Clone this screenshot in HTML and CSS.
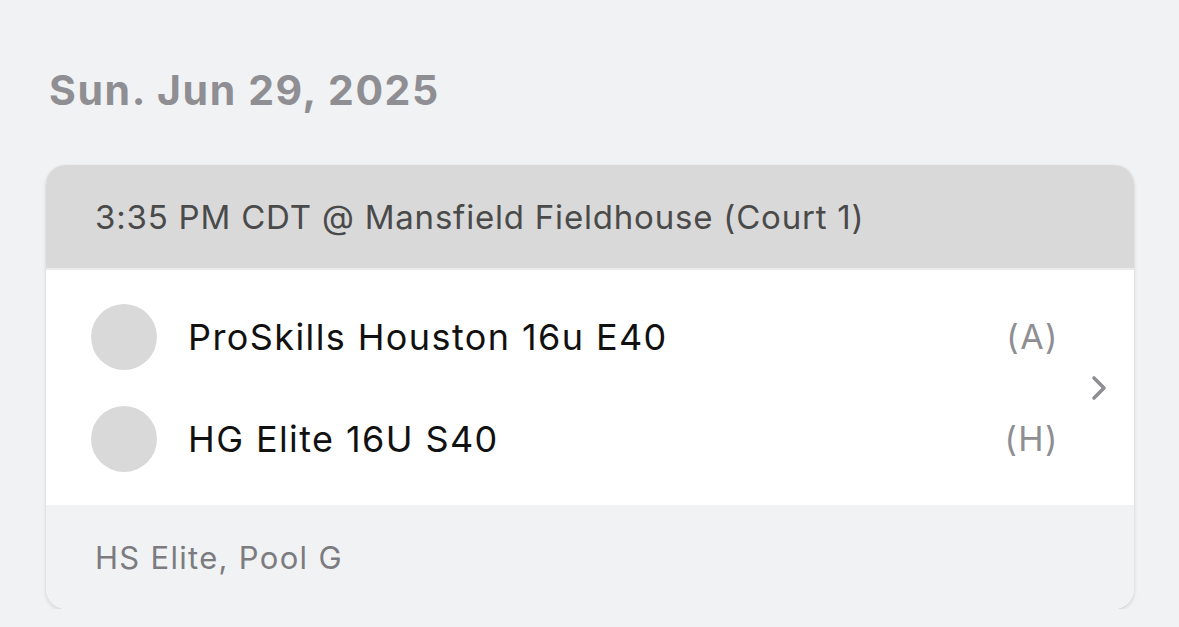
FILE: index.html
```html
<!DOCTYPE html>
<html>
<head>
<meta charset="utf-8">
<link rel="stylesheet" href="styles.css">
</head>
<body>
<main class="page">
  <h2 class="date">Sun. Jun 29, 2025</h2>
  <section class="card">
    <header class="card-head">3:35 PM CDT @ Mansfield Fieldhouse (Court 1)</header>
    <div class="card-body">
      <div class="teams">
        <div class="team">
          <span class="avatar"></span>
          <span class="name">ProSkills Houston 16u E40</span>
          <span class="side">(A)</span>
        </div>
        <div class="team">
          <span class="avatar"></span>
          <span class="name">HG Elite 16U S40</span>
          <span class="side">(H)</span>
        </div>
      </div>
      <svg class="chevron" width="16" height="26" viewBox="0 0 16 26">
        <path d="M3 3 L13 13 L3 23" fill="none" stroke="#8e8e93" stroke-width="3.6" stroke-linecap="round" stroke-linejoin="round"/>
      </svg>
    </div>
    <footer class="card-foot">HS Elite, Pool G</footer>
  </section>
</main>
</body>
</html>
```
FILE: styles.css
```css
html, body {
  margin: 0;
  padding: 0;
  background: #f1f2f4;
}
body {
  font-family: Inter, "Noto Sans", sans-serif;
}
.page {
  padding: 62px 45px 0 46px;
}
.date {
  margin: 0 0 0 3px;
  font-size: 41px;
  font-weight: 700;
  color: #8e8e93;
  line-height: 56px;
  letter-spacing: 1.6px;
}
.card {
  margin-top: 47px;
  width: 1088px;
  border-radius: 20px;
  overflow: hidden;
  background: #ffffff;
  box-shadow: 0 2px 4px rgba(0,0,0,0.12), 0 0 1px rgba(0,0,0,0.15);
}
.card-head {
  background: #d9d9d9;
  height: 103px;
  border-bottom: 2px solid #ececec;
  display: flex;
  align-items: center;
  padding-left: 49px;
  font-size: 33px;
  letter-spacing: 0.8px;
  color: #4a4a4a;
}
.card-body {
  display: flex;
  align-items: center;
  height: 235px;
  background: #fff;
}
.teams {
  flex: 1;
  display: flex;
  flex-direction: column;
  gap: 36px;
  padding-left: 45px;
}
.team {
  display: flex;
  align-items: center;
  height: 66px;
}
.avatar {
  width: 66px;
  height: 66px;
  border-radius: 50%;
  background: #d9d9d9;
  flex: none;
}
.name {
  margin-left: 31px;
  flex: 1;
  font-size: 36px;
  letter-spacing: 1.4px;
  color: #111;
}
.side {
  font-size: 34px;
  letter-spacing: 1.5px;
  color: #8e8e93;
  margin-right: 2px;
}
.chevron {
  margin: 0 27px 0 30px;
  flex: none;
}
.card-foot {
  background: #f1f2f4;
  height: 104px;
  display: flex;
  align-items: center;
  padding-left: 49px;
  font-size: 31px;
  letter-spacing: 1.3px;
  color: #7c7c80;
}
```
